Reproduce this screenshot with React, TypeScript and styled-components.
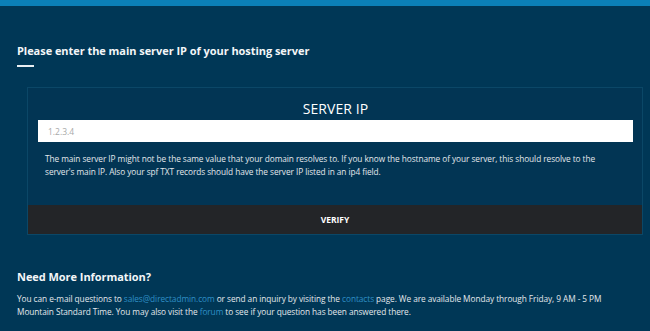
import React from "react";
import styled, { createGlobalStyle } from "styled-components";

const Global = createGlobalStyle`
  html, body { margin: 0; padding: 0; background: #003756; }
  body { font-family: "Open Sans", "Noto Sans", sans-serif; color: #fff; }
`;

const Page = styled.div`
  width: 650px;
  height: 331px;
  background: #003756;
  overflow: hidden;
`;

const TopBar = styled.div`
  height: 6px;
  background: #0b80b8;
`;

const Main = styled.main`
  padding: 36px 7px 0 17px;
`;

const Heading = styled.h1`
  margin: 0;
  font-size: 11px;
  line-height: 18px;
  font-weight: 700;
  letter-spacing: -0.05px;
  color: #f4f6f8;
`;

const Rule = styled.div`
  width: 17px;
  height: 2px;
  background: #e8eef2;
  margin-top: 5px;
`;

const Card = styled.section`
  margin: 20px 0 0 10px;
  border: 1px solid #0b4767;
  background: #023554;
  display: flex;
  flex-direction: column;
`;

const CardBody = styled.div`
  padding: 11px 9px 27px 10px;
  display: flex;
  flex-direction: column;
`;

const CardTitle = styled.h2`
  margin: 0;
  text-align: center;
  font-size: 14px;
  line-height: 20px;
  font-weight: 400;
  color: #fff;
  letter-spacing: 0.1px;
`;

const Input = styled.input`
  margin-top: 1px;
  height: 22px;
  box-sizing: border-box;
  border: none;
  outline: none;
  background: #fff;
  padding: 0 10px;
  font-family: "Open Sans", sans-serif;
  font-size: 8.5px;
  color: #333;
  &::placeholder { color: #a9a9a9; }
`;

const Help = styled.p`
  margin: 10px 7px 0 7px;
  font-size: 8.3px;
  letter-spacing: -0.07px;
  line-height: 13px;
  color: #e3e8ec;
`;

const Verify = styled.button`
  height: 29px;
  border: none;
  background: #232528;
  color: #fff;
  font-family: "Open Sans", sans-serif;
  font-size: 8.5px;
  font-weight: 700;
  cursor: pointer;
`;

const Info = styled.section`
  margin-top: 34px;
  padding-right: 4px;
`;

const InfoTitle = styled.h3`
  margin: 0;
  font-size: 11px;
  line-height: 16px;
  font-weight: 700;
  letter-spacing: -0.05px;
  color: #f4f6f8;
`;

const InfoText = styled.p`
  margin: 7px 0 0;
  font-size: 8.3px;
  letter-spacing: -0.07px;
  line-height: 13px;
  color: #e3e8ec;
`;

const Link = styled.a`
  color: #2f8fc6;
  text-decoration: none;
`;

export default function App() {
  return (
    <Page>
      <Global />
      <TopBar />
      <Main>
        <Heading>Please enter the main server IP of your hosting server</Heading>
        <Rule />
        <Card>
          <CardBody>
            <CardTitle>SERVER IP</CardTitle>
            <Input placeholder="1.2.3.4" />
            <Help>
              The main server IP might not be the same value that your domain resolves to. If you know the
              hostname of your server, this should resolve to the server's main IP. Also your spf TXT records
              should have the server IP listed in an ip4 field.
            </Help>
          </CardBody>
          <Verify>VERIFY</Verify>
        </Card>
        <Info>
          <InfoTitle>Need More Information?</InfoTitle>
          <InfoText>
            You can e-mail questions to <Link href="#">sales@directadmin.com</Link> or send an inquiry by
            visiting the <Link href="#">contacts</Link> page. We are available Monday through Friday, 9 AM - 5 PM
            Mountain Standard Time. You may also visit the <Link href="#">forum</Link> to see if your question has
            been answered there.
          </InfoText>
        </Info>
      </Main>
    </Page>
  );
}
